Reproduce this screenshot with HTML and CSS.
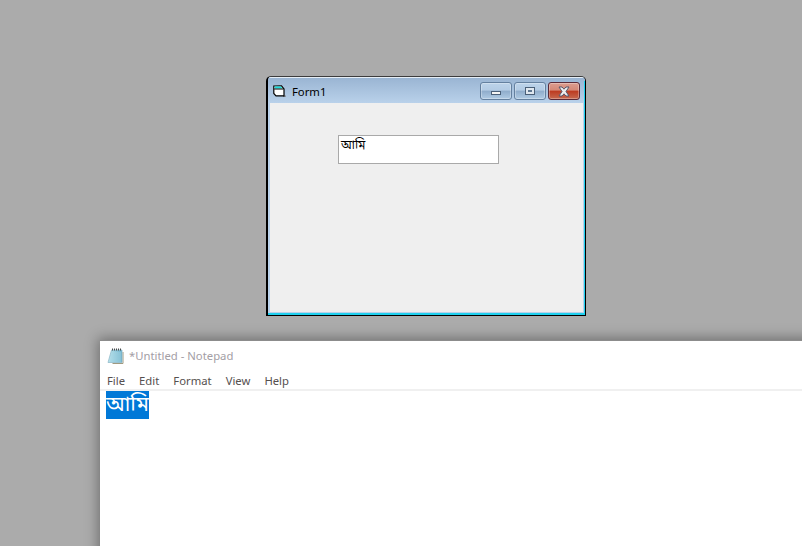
FILE: index.html
```
<!DOCTYPE html>
<html lang="bn">
<head>
<meta charset="utf-8">
<title>Form1 and Notepad</title>
<link rel="stylesheet" href="styles.css">
</head>
<body>
<main class="desktop">
  <section class="form-window">
    <header class="form-title">
      <svg class="form-icon" width="14" height="13" viewBox="0 0 14 13">
        <path d="M10 11.5 L13 11" stroke="#777" stroke-width="1.2"/>
        <path d="M.8 1 L8.5 .8 L11 4 L11 10.8 L3 10.8 L.8 8.5 Z" fill="#fff" stroke="#000" stroke-width="1.2"/>
        <path d="M1.5 1.5 L8 1.4 L9.6 3.4 L1.8 3.4 Z" fill="#18dfe0"/>
        <path d="M1.2 4 L10.5 4" stroke="#000" stroke-width="1"/>
      </svg>
      <span class="form-caption">Form1</span>
      <div class="caption-buttons">
        <button class="cap-btn" aria-label="Minimize"><span class="glyph-min"></span></button>
        <button class="cap-btn" aria-label="Maximize"><span class="glyph-max"></span></button>
        <button class="cap-btn cap-close" aria-label="Close">
          <svg width="16" height="11" viewBox="0 0 16 11"><path d="M3 1 L6 1 L8 3.2 L10 1 L13 1 L10 5.5 L13 10 L10 10 L8 7.8 L6 10 L3 10 L6 5.5 Z" fill="#eeeeee" stroke="#55556a"/></svg>
        </button>
      </div>
    </header>
    <div class="form-client">
      <div class="text-box">আমি</div>
    </div>
  </section>

  <section class="notepad">
    <header class="np-title">
      <svg class="np-icon" width="18" height="18" viewBox="0 0 18 18">
        <defs>
          <linearGradient id="np-page" x1="0" y1="0" x2="1" y2="0">
            <stop offset="0" stop-color="#bfe6ee"/>
            <stop offset="1" stop-color="#6fb3cd"/>
          </linearGradient>
        </defs>
        <path d="M5.5 16.5 L16 16.5 L16 5" fill="none" stroke="#a09a80"/>
        <path d="M4.5 3 L15 3 L15 15.5 L1 15.5 Z" fill="url(#np-page)" stroke="#8ab4c6" stroke-width=".7"/>
        <path d="M5 6 L14 6 M4.3 8 L14 8 M3.6 10 L14 10 M3 12 L14 12 M2.4 14 L14 14" stroke="#a6d6e3" stroke-width=".8"/>
        <path d="M5 2.5 L15 2.5" stroke="#4b4b4b" stroke-dasharray="1 1" stroke-width="2"/>
      </svg>
      <span class="np-caption">*Untitled - Notepad</span>
    </header>
    <nav class="np-menu">
      <span>File</span><span>Edit</span><span>Format</span><span>View</span><span>Help</span>
    </nav>
    <div class="np-body"><span class="np-selection">আমি</span></div>
  </section>
</main>
</body>
</html>
```
FILE: styles.css
```
html, body {
  margin: 0;
  padding: 0;
}
body {
  width: 802px;
  height: 546px;
  overflow: hidden;
  background: #ababab;
}
.desktop {
  position: relative;
  width: 802px;
  height: 546px;
  overflow: hidden;
  background: #ababab;
}
.form-window {
  position: absolute;
  left: 266px;
  top: 76px;
  width: 320px;
  height: 240px;
  box-sizing: border-box;
  display: flex;
  flex-direction: column;
  border: 1px solid #000;
  border-top-color: #3c3c3c;
  border-width: 1px 1px 1px 2px;
  border-radius: 5px 5px 0 0;
  background: #b9d1ea;
  overflow: hidden;
}
.form-title {
  height: 26px;
  flex: none;
  display: flex;
  align-items: center;
  box-sizing: border-box;
  padding: 0 5px 0 5px;
  background: linear-gradient(#9ab5d3, #b9d1ea);
  border-top: 1px solid #e6eef6;
}
.form-icon {
  flex: none;
  display: block;
  margin-top: 1px;
}
.form-caption {
  margin-left: 5px;
  margin-top: 1px;
  font: 11.3px "Noto Sans", "Open Sans", sans-serif;
  color: #000;
}
.caption-buttons {
  margin-left: auto;
  align-self: flex-start;
  margin-top: 4px;
  display: flex;
  gap: 2px;
}
.cap-btn {
  width: 32px;
  height: 18px;
  padding: 0;
  box-sizing: border-box;
  display: flex;
  align-items: center;
  justify-content: center;
  border: 1px solid #64809f;
  border-radius: 3px;
  background: linear-gradient(#bcd3ea 0, #b3cbe4 45%, #8faccb 50%, #b0cbe4 100%);
  box-shadow: inset 0 0 0 1px rgba(255,255,255,.3);
}
.glyph-min {
  display: block;
  width: 8px;
  height: 2px;
  margin-top: 4px;
  background: #f4f4f4;
  border: 1px solid #4a5f78;
}
.glyph-max {
  display: block;
  width: 4px;
  height: 2px;
  border: 2px solid #dfe7ef;
  outline: 1px solid #4a5f78;
  background: #5f7791;
}
.cap-close {
  border-color: #5a2a38;
  background: linear-gradient(#dc9d90 0, #d58876 45%, #bd3a20 50%, #c6694f 100%);
}
.form-client {
  flex: 1;
  margin: 0 2px 3px 2px;
  padding: 32px 0 0 68px;
  background: #efefef;
}
.form-window::after {
  content: "";
  position: absolute;
  right: 0;
  top: 4px;
  bottom: 0;
  width: 1px;
  background: #1fd0ee;
}
.form-window::before {
  content: "";
  position: absolute;
  left: 0;
  right: 0;
  bottom: 0;
  height: 2px;
  background: #1fd0ee;
}
.text-box {
  width: 161px;
  height: 29px;
  box-sizing: border-box;
  border: 1px solid #a9a9a9;
  background: #fff;
  padding: 2px 0 0 2px;
  font: 12px/16px "Noto Sans Bengali", "Noto Sans", "DejaVu Sans", sans-serif;
  color: #000;
}
.notepad {
  position: absolute;
  left: 100px;
  top: 340px;
  width: 720px;
  height: 230px;
  background: #fff;
  box-shadow: 0 0 12px 2px rgba(0,0,0,.35);
  border-top: 1px solid #8c8c8c;
  box-sizing: border-box;
}
.np-title {
  height: 29px;
  display: flex;
  align-items: center;
  padding-left: 7px;
  box-sizing: border-box;
}
.np-icon {
  flex: none;
  display: block;
}
.np-caption {
  margin-left: 4px;
  font: 11.3px "Noto Sans", "Open Sans", sans-serif;
  color: #a39ea5;
}
.np-menu {
  display: flex;
  align-items: center;
  gap: 14px;
  padding: 1px 0 0 7px;
  box-sizing: border-box;
  height: 21px;
  border-bottom: 2px solid #f0f0f0;
  font: 11.3px "Noto Sans", "Open Sans", sans-serif;
  color: #55504f;
}
.np-body {
  padding-left: 6px;
}
.np-selection {
  display: inline-block;
  height: 28px;
  width: 43px;
  background: #0078d7;
  color: #fff;
  font: 21px/30px "Noto Sans Bengali", "Noto Sans", "DejaVu Sans", sans-serif;
}
```
